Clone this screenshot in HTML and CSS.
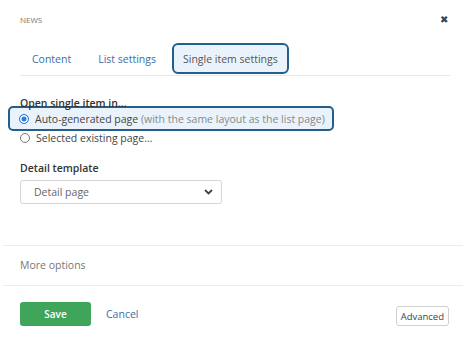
FILE: index.html
```html
<!DOCTYPE html>
<html lang="en">
<head>
    <meta charset="UTF-8">
    <title>News - Single item settings</title>
    <link rel="stylesheet" href="styles.css">
</head>
<body>
    <div class="dialog">
        <!-- header -->
        <div class="dialog-header">
            <span class="dialog-title">NEWS</span>
            <span class="close">&#10006;</span>
        </div>
        <!-- tabs -->
        <div class="tabs">
            <div class="tab">Content</div>
            <div class="tab">List settings</div>
            <div class="tab active">Single item settings</div>
        </div>
        <!-- settings -->
        <div class="section">
            <div class="label">Open single item in...</div>
            <label class="option selected">
                <span class="radio checked"></span>
                <span>Auto-generated page <span class="muted">(with the same layout as the list page)</span></span>
            </label>
            <label class="option">
                <span class="radio"></span>
                <span>Selected existing page...</span>
            </label>
            <div class="label template-label">Detail template</div>
            <div class="select">
                <span>Detail page</span>
                <svg width="9" height="6" viewBox="0 0 9 6"><path d="M1 1 L4.5 4.5 L8 1" fill="none" stroke="#444" stroke-width="1.8"/></svg>
            </div>
        </div>
        <div class="more">More options</div>
        <!-- footer -->
        <div class="footer">
            <button class="btn-save">Save</button>
            <a class="cancel">Cancel</a>
            <button class="btn-advanced">Advanced</button>
        </div>
    </div>
</body>
</html>
```

FILE: styles.css
```css
/* base */
body, html {
    margin: 0;
    padding: 0;
    background: #fff;
    font-family: "Open Sans", Arial, sans-serif;
    color: #333;
}
.dialog {
    width: 466px;
    height: 337px;
    overflow: hidden;
}
/* header */
.dialog-header {
    display: flex;
    justify-content: space-between;
    align-items: center;
    padding: 13px 18px 0 20px;
    height: 12px;
}
.dialog-title {
    font-size: 8px;
    color: #777;
}
.close {
    font-size: 10px;
    color: #444;
}
/* tabs */
.tabs {
    display: flex;
    margin: 18px 16px 0 20px;
    padding-left: 1px;
    border-bottom: 1px solid #e8e8e8;
    padding-bottom: 1px;
}
.tab {
    display: flex;
    align-items: center;
    height: 27px;
    padding: 0 9px;
    border: 2px solid transparent;
    border-radius: 6px;
    margin-right: 5px;
    font-size: 10.5px;
    color: #3b6ea8;
}
.tab.active {
    border-color: #235f8a;
    background: #eaf3fb;
    color: #555;
}
/* settings */
.section {
    padding: 20px 0 0 20px;
}
.label {
    font-size: 10.5px;
    font-weight: 600;
    color: #333;
    line-height: 14px;
}
.option {
    display: flex;
    align-items: center;
    font-size: 10.5px;
    color: #444;
    height: 14px;
    white-space: nowrap;
}
.option.selected {
    width: fit-content;
    margin-top: -4px;
    margin-left: -12px;
    padding: 0 7px 0 9px;
    height: 21px;
    border: 2px solid #235f8a;
    border-radius: 5px;
    background: #eaf3fb;
}
.muted {
    color: #888;
}
.radio {
    flex: none;
    width: 10px;
    height: 10px;
    border: 1px solid #777;
    border-radius: 50%;
    margin-right: 6px;
    background: #fff;
    box-sizing: border-box;
}
.radio.checked {
    border: 1px solid #2f7de1;
    background: #2f7de1;
    box-shadow: inset 0 0 0 1.5px #fff;
}
.template-label {
    margin-top: 16px;
}
.select {
    display: flex;
    justify-content: space-between;
    align-items: center;
    width: 202px;
    height: 24px;
    margin-top: 5px;
    padding: 0 8px 0 13px;
    box-sizing: border-box;
    border: 1px solid #d6d6d6;
    border-radius: 3px;
    font-size: 10.5px;
    color: #666;
}
/* more options */
.more {
    margin: 41px 3px 0 3px;
    border-top: 1px solid #ececec;
    border-bottom: 1px solid #ececec;
    height: 39px;
    line-height: 39px;
    padding-left: 17px;
    font-size: 10.5px;
    color: #777;
}
/* footer */
.footer {
    display: flex;
    align-items: center;
    padding: 16px 17px 0 20px;
}
.btn-save {
    width: 71px;
    height: 24px;
    border: none;
    border-radius: 3px;
    background: #3fa55b;
    color: #fff;
    font-family: inherit;
    font-size: 10px;
    font-weight: 600;
}
.cancel {
    margin-left: 15px;
    font-size: 10.5px;
    color: #3b6ea8;
}
.btn-advanced {
    margin-left: auto;
    margin-top: 4px;
    height: 20px;
    padding: 0 4px;
    border: 1px solid #cfcfcf;
    border-radius: 3px;
    background: #fff;
    color: #444;
    font-family: inherit;
    font-size: 9.5px;
}
```
